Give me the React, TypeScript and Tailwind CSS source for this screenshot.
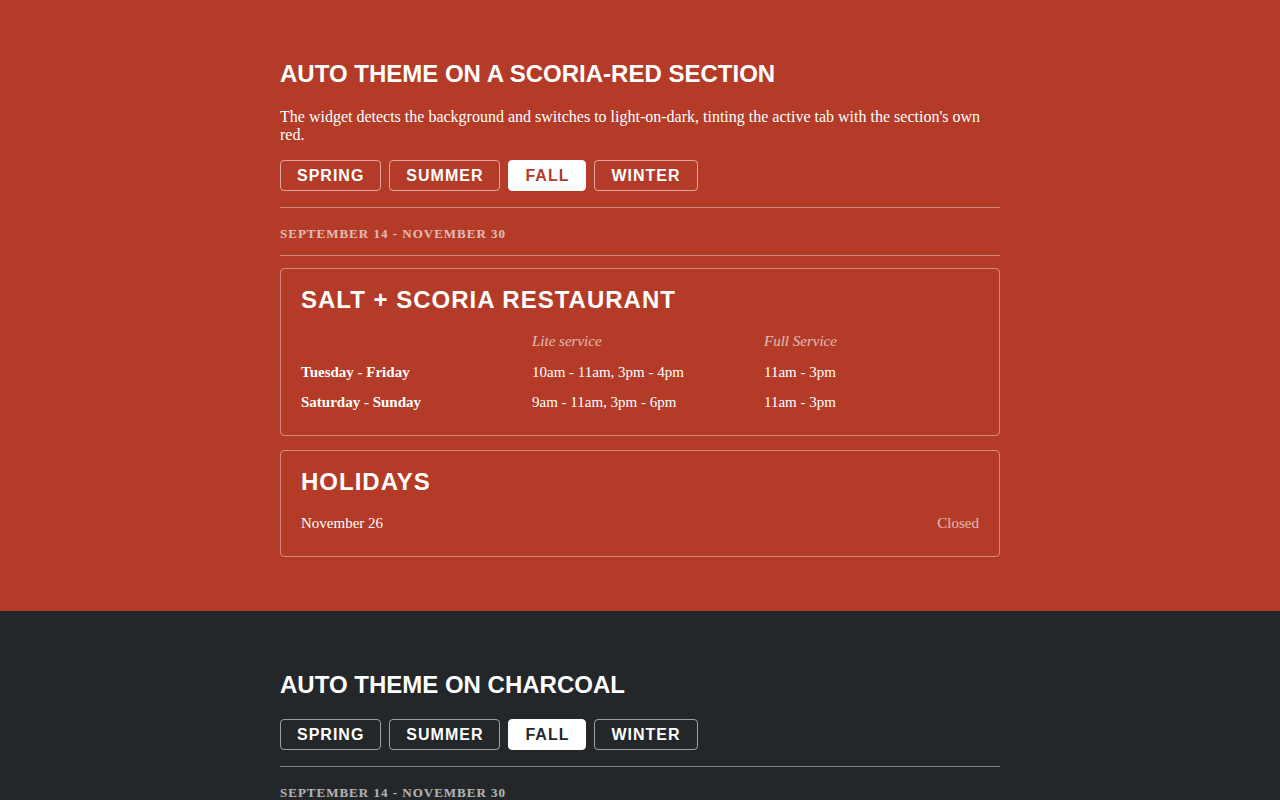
import { useState } from "react";

type Theme = "red" | "charcoal";

const seasons = ["Spring", "Summer", "Fall", "Winter"];

const hours = [
  { days: "Tuesday - Friday", lite: "10am - 11am, 3pm - 4pm", full: "11am - 3pm" },
  { days: "Saturday - Sunday", lite: "9am - 11am, 3pm - 6pm", full: "11am - 3pm" },
];

function SeasonTabs({ theme }: { theme: Theme }) {
  const [active, setActive] = useState("Fall");
  const activeText = theme === "red" ? "text-[#b33b27]" : "text-[#23272a]";

  return (
    <div className="flex gap-2">
      {seasons.map((s) => (
        <button
          key={s}
          onClick={() => setActive(s)}
          className={
            "h-[31px] px-4 rounded-[4px] border font-['Liberation_Sans',Arial,sans-serif] font-bold text-base uppercase tracking-[1px] leading-none flex items-center " +
            (s === active
              ? "bg-white border-white " + activeText
              : "bg-transparent border-white/55 text-white")
          }
        >
          {s}
        </button>
      ))}
    </div>
  );
}

function Card({ title, last, children }: { title: string; last?: boolean; children: React.ReactNode }) {
  return (
    <div className={"border border-white/40 rounded-[4px] px-5 pt-[17px] " + (last ? "pb-[18px]" : "pb-[17px]")}>
      <h3 className="font-['Liberation_Sans',Arial,sans-serif] font-bold text-2xl leading-[normal] tracking-[1px] uppercase text-white mb-3">
        {title}
      </h3>
      {children}
    </div>
  );
}

function SeasonWidget({ theme, title, blurb }: { theme: Theme; title: string; blurb?: string }) {
  const bg = theme === "red" ? "bg-[#b33b27]" : "bg-[#23272a]";

  return (
    <section className={bg + " pt-[60px] pb-[54px] px-4"}>
      <div className="w-[720px] mx-auto font-['Liberation_Serif','Times_New_Roman',serif] text-white">
        <h2 className="font-['Liberation_Sans',Arial,sans-serif] font-bold text-2xl leading-[normal] uppercase mb-5">
          {title}
        </h2>
        {blurb && <p className="text-base leading-[normal] mb-4">{blurb}</p>}

        <SeasonTabs theme={theme} />

        <div className="mt-4 border-t border-b border-white/40 pt-[18px] pb-[13px]">
          <p className="text-[13px] leading-[normal] font-bold uppercase tracking-[1px] text-white/65">
            September 14 - November 30
          </p>
        </div>

        <div className="mt-3 flex flex-col gap-[14px]">
          <Card title="Salt + Scoria Restaurant">
            <div className="grid grid-cols-[231px_232px_1fr] text-[15px] leading-[16.5px]">
              <div className="py-[7px]" />
              <div className="py-[7px] italic text-white/65">Lite service</div>
              <div className="py-[7px] italic text-white/65">Full Service</div>
              {hours.map((h) => (
                <div key={h.days} className="contents">
                  <div className="py-[7px] font-bold">{h.days}</div>
                  <div className="py-[7px]">{h.lite}</div>
                  <div className="py-[7px]">{h.full}</div>
                </div>
              ))}
            </div>
          </Card>

          <Card title="Holidays" last>
            <div className="flex justify-between py-[7px] text-[15px] leading-[16.5px]">
              <span>November 26</span>
              <span className="text-white/65">Closed</span>
            </div>
          </Card>
        </div>
      </div>
    </section>
  );
}

export default function App() {
  return (
    <div>
      <SeasonWidget
        theme="red"
        title="Auto theme on a scoria-red section"
        blurb="The widget detects the background and switches to light-on-dark, tinting the active tab with the section's own red."
      />
      <SeasonWidget theme="charcoal" title="Auto theme on charcoal" />
    </div>
  );
}
